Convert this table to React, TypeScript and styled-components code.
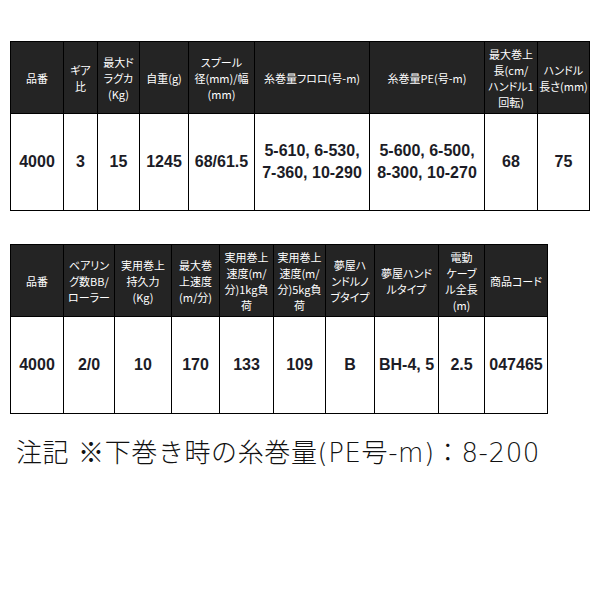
import styled, { createGlobalStyle } from "styled-components";

const GlobalStyle = createGlobalStyle`
  body {
    margin: 0;
    background: #fff;
  }
`;

interface SpecTable {
  widths: number[];
  heads: string[][];
  cells: string[][];
}

const specs1: SpecTable = {
  widths: [53, 34, 42, 49, 66, 115, 115, 53, 52],
  heads: [
    ["品番"],
    ["ギア", "比"],
    ["最大ド", "ラグカ", "(Kg)"],
    ["自重(g)"],
    ["スプール", "径(mm)/幅", "(mm)"],
    ["糸巻量フロロ(号-m)"],
    ["糸巻量PE(号-m)"],
    ["最大巻上", "長(cm/", "ハンドル1", "回転)"],
    ["ハンドル", "長さ(mm)"],
  ],
  cells: [
    ["4000"],
    ["3"],
    ["15"],
    ["1245"],
    ["68/61.5"],
    ["5-610, 6-530,", "7-360, 10-290"],
    ["5-600, 6-500,", "8-300, 10-270"],
    ["68"],
    ["75"],
  ],
};

const specs2: SpecTable = {
  widths: [53, 51, 57, 48, 54, 52, 49, 64, 46, 63],
  heads: [
    ["品番"],
    ["ベアリン", "グ数BB/", "ローラー"],
    ["実用巻上", "持久力", "(Kg)"],
    ["最大巻", "上速度", "(m/分)"],
    ["実用巻上", "速度(m/", "分)1kg負", "荷"],
    ["実用巻上", "速度(m/", "分)5kg負", "荷"],
    ["夢屋ハ", "ンドルノ", "ブタイプ"],
    ["夢屋ハンド", "ルタイプ"],
    ["電動", "ケーブ", "ル全長", "(m)"],
    ["商品コード"],
  ],
  cells: [
    ["4000"],
    ["2/0"],
    ["10"],
    ["170"],
    ["133"],
    ["109"],
    ["B"],
    ["BH-4, 5"],
    ["2.5"],
    ["047465"],
  ],
};

const Table = ({ spec }: { spec: SpecTable }) => (
  <Grid style={{ gridTemplateColumns: spec.widths.map((w) => `${w}px`).join(" ") }}>
    {spec.heads.map((lines, i) => (
      <HeadCell key={`h${i}`}>
        {lines.map((l) => (
          <span key={l}>{l}</span>
        ))}
      </HeadCell>
    ))}
    {spec.cells.map((lines, i) => (
      <BodyCell key={`b${i}`}>
        {lines.map((l) => (
          <span key={l}>{l}</span>
        ))}
      </BodyCell>
    ))}
  </Grid>
);

const App = () => (
  <Page>
    <GlobalStyle />
    <Table spec={specs1} />
    <Table spec={specs2} />
    <Note>
      注記 <Mark>※</Mark>下巻き時の糸巻量(PE号-m)：8-200
    </Note>
  </Page>
);

export default App;

const Page = styled.div`
  display: flex;
  flex-direction: column;
  align-items: flex-start;
  padding: 41px 0 0 10px;
`;

const Grid = styled.div`
  display: grid;
  grid-template-rows: 72px 97px;
  border-top: 1px solid #000;
  border-left: 1px solid #000;

  & + & {
    margin-top: 33px;
  }
`;

const Cell = styled.div`
  display: flex;
  flex-direction: column;
  align-items: center;
  justify-content: center;
  border-right: 1px solid #000;
  border-bottom: 1px solid #000;
  text-align: center;
  white-space: nowrap;
`;

const HeadCell = styled(Cell)`
  background: #242424;
  color: #fff;
  font-family: "Noto Sans CJK JP", sans-serif;
  font-size: 11px;
  line-height: 16px;
  font-feature-settings: "palt";
`;

const BodyCell = styled(Cell)`
  color: #1c1c26;
  font-family: "Liberation Sans", Arial, sans-serif;
  font-size: 16px;
  font-weight: 700;
  line-height: 22px;
`;

const Note = styled.p`
  margin: 22px 0 0 6px;
  color: #111;
  font-family: "DejaVu Sans", "Noto Sans CJK JP", sans-serif;
  font-size: 26px;
  font-weight: 300;
  line-height: 30px;
  letter-spacing: 0.6px;
`;

// 米印だけは全角の字形に合わせる
const Mark = styled.span`
  font-family: "Noto Sans CJK JP", sans-serif;
`;
